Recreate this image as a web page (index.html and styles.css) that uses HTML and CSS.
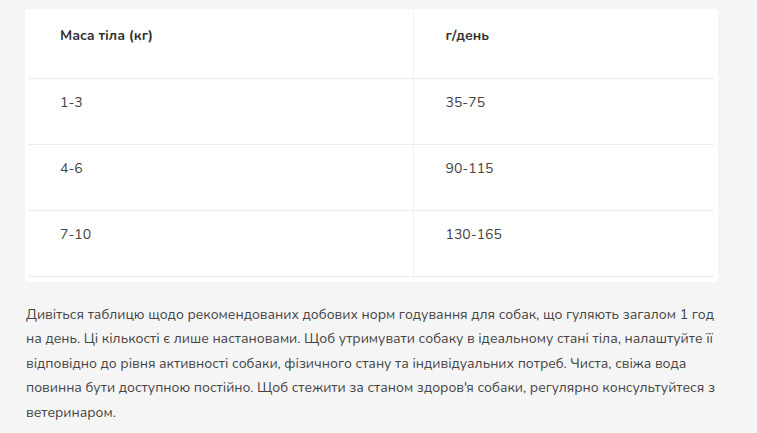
FILE: index.html
```html
<!DOCTYPE html>
<html lang="uk">
<head>
<meta charset="utf-8">
<link rel="stylesheet" href="styles.css">
</head>
<body>
<div class="page">
  <div class="card">
    <table class="feed">
      <thead>
        <tr><th class="c1">Маса тіла (кг)</th><th class="c2">г/день</th></tr>
      </thead>
      <tbody>
        <tr><td class="c1">1-3</td><td class="c2">35-75</td></tr>
        <tr><td class="c1">4-6</td><td class="c2">90-115</td></tr>
        <tr><td class="c1">7-10</td><td class="c2">130-165</td></tr>
      </tbody>
    </table>
  </div>
  <p class="note">Дивіться таблицю щодо рекомендованих добових норм годування для собак, що гуляють загалом 1 год на день. Ці кількості є лише настановами. Щоб утримувати собаку в ідеальному стані тіла, налаштуйте її відповідно до рівня активності собаки, фізичного стану та індивідуальних потреб. Чиста, свіжа вода повинна бути доступною постійно. Щоб стежити за станом здоров'я собаки, регулярно консультуйтеся з ветеринаром.</p>
</div>
</body>
</html>
```
FILE: styles.css
```css
html, body {
  margin: 0;
  padding: 0;
  background: #f5f5f5;
}
body {
  font-family: "Nunito", "Open Sans", "Noto Sans", sans-serif;
  color: #444;
}
.page {
  padding: 9px 39px 0 25px;
}
.card {
  background: #fff;
  border-radius: 3px;
  padding: 3px 4px 5px 3px;
  width: 686px;
}
.feed {
  width: 686px;
  border-collapse: collapse;
  table-layout: fixed;
}
.feed th, .feed td {
  text-align: left;
  vertical-align: top;
  height: 66px;
  box-sizing: border-box;
  padding: 15px 32px 0 32px;
  line-height: 18px;
  border-bottom: 1px solid #ececec;
}
.feed th {
  font-weight: 700;
  font-size: 14px;
  color: #333;
}
.feed td {
  font-size: 14px;
  font-weight: 400;
  color: #444;
}
.feed .c1 {
  width: 385px;
  border-right: 1px solid #f0f0f0;
}
.feed .c2 {
  width: 301px;
}
.note {
  margin: 21px 0 0 1px;
  font-size: 14px;
  line-height: 24.5px;
  color: #444;
  width: 690px;
}
```
